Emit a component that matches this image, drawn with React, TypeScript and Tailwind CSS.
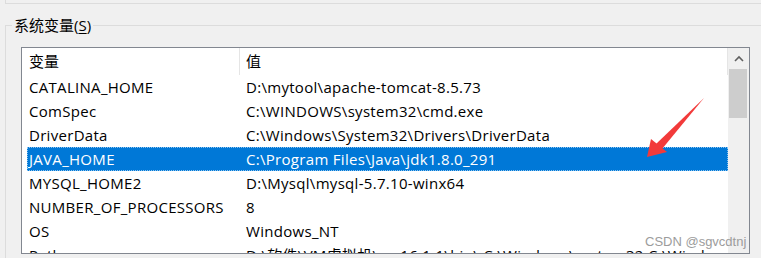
import React from 'react';

const rows: [string, string][] = [
  ['CATALINA_HOME', 'D:\\mytool\\apache-tomcat-8.5.73'],
  ['ComSpec', 'C:\\WINDOWS\\system32\\cmd.exe'],
  ['DriverData', 'C:\\Windows\\System32\\Drivers\\DriverData'],
  ['JAVA_HOME', 'C:\\Program Files\\Java\\jdk1.8.0_291'],
  ['MYSQL_HOME2', 'D:\\Mysql\\mysql-5.7.10-winx64'],
  ['NUMBER_OF_PROCESSORS', '8'],
  ['OS', 'Windows_NT'],
  ['Path', 'D:\\软件\\VM虚拟机\\vm16.1.1\\bin\\;C:\\Windows\\system32;C:\\Windows'],
];

const selected = 'JAVA_HOME';

// scrollbar up arrow
const ChevronUp = () => (
  <svg width="10" height="7" viewBox="0 0 10 7">
    <polyline points="1,6 5,2 9,6" fill="none" stroke="#606060" strokeWidth="1.6" />
  </svg>
);

// red pointer drawn on the screenshot
const RedArrow = () => (
  <svg className="absolute left-0 top-0 pointer-events-none" width="761" height="258" viewBox="0 0 761 258">
    <polygon points="704,98 662,149 656,144" fill="#f23a3a" />
    <polygon points="647,157 651,139 667,152" fill="#f23a3a" />
  </svg>
);

export default function App() {
  return (
    <div className="relative w-[761px] h-[258px] overflow-hidden bg-[#f0f0f0] text-black font-['Open_Sans','Noto_Sans_CJK_SC',sans-serif] text-[15px]">
      {/* bottom of the group above */}
      <div className="ml-[5px] h-[4px] border-l border-b border-[#dcdcdc]" />

      <fieldset className="mt-[11px] ml-[5px] border-l border-t border-[#dcdcdc] pb-[20px]">
        <legend className="ml-[6px] px-[2px] leading-[20px] text-[15px]">
          系统变量(<span className="underline underline-offset-2">S</span>)
        </legend>

        <div className="mt-[12px] ml-[15px] w-[729px] h-[207px] border border-[#828790] bg-white flex overflow-hidden">
          <div className="w-[706px] pl-[5px]">
            <div className="flex h-[27px] items-center border-r border-[#e5e5e5]">
              <div className="w-[213px] h-full flex items-center pl-[2px] border-r border-[#e5e5e5]">变量</div>
              <div className="pl-[6px]">值</div>
            </div>
            {rows.map(([name, value]) => {
              const sel = name === selected;
              return (
                <div
                  key={name}
                  className={
                    sel
                      ? 'flex h-[24px] items-center whitespace-nowrap tracking-[0.3px] bg-[#0078d7] text-white outline outline-1 outline-dotted outline-[#8cc4f0] -outline-offset-1'
                      : 'flex h-[24px] items-center whitespace-nowrap tracking-[0.3px]'
                  }
                >
                  <div className="w-[213px] shrink-0 pl-[2px]">{name}</div>
                  <div className="pl-[6px]">{value}</div>
                </div>
              );
            })}
          </div>

          <div className="w-[21px] bg-[#f0f0f0] flex flex-col">
            <div className="h-[21px] flex items-center justify-center">
              <ChevronUp />
            </div>
            <div className="ml-[1px] w-[18px] h-[49px] bg-[#cdcdcd]" />
          </div>
        </div>
      </fieldset>

      <RedArrow />
      <span className="absolute left-[645px] top-[232px] text-[13px] text-[#9c9c9c] font-['Liberation_Sans',sans-serif]">
        CSDN @sgvcdtnj
      </span>
    </div>
  );
}
